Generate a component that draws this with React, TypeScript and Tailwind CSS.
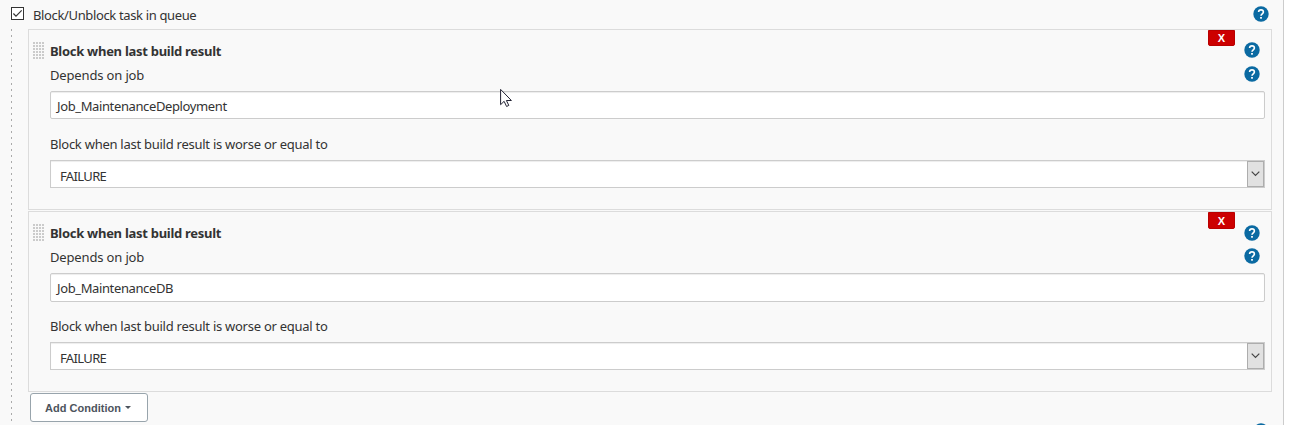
import React from "react";

function Help({ className = "" }: { className?: string }) {
  return (
    <svg className={`block shrink-0 ${className}`} width="16" height="16" viewBox="0 0 16 16" aria-label="Help">
      <circle cx="8" cy="8" r="7.7" fill="#0b6aa2" />
      <path d="M5.6 6.1C5.6 4.6 6.6 3.9 8 3.9s2.4.8 2.4 2.1c0 1.7-2.4 1.9-2.4 3.8" fill="none" stroke="#fff" strokeWidth="1.6" />
      <rect x="7.1" y="11" width="1.8" height="1.7" fill="#fff" />
    </svg>
  );
}

function Grip() {
  return (
    <div className="grid h-[18px] w-[11px] shrink-0 grid-cols-[repeat(4,2px)] grid-rows-[repeat(6,2px)] gap-px">
      {Array.from({ length: 24 }, (_, i) => (
        <span key={i} className="h-[2px] w-[2px] bg-[#cbcbcb]" />
      ))}
    </div>
  );
}

function Condition({ job, tall = false }: { job: string; tall?: boolean }) {
  return (
    <section className="relative flex h-[181px] w-[1244px] flex-col border border-[#dcdcdc] pl-[21px]">
      <button className={`absolute left-[1179px] top-0 flex w-[27px] items-center justify-center rounded-b-[2px] border border-[#b90000] bg-[#cc0000] pt-px font-['Liberation_Sans',sans-serif] text-[11px] font-bold leading-none text-white ${tall ? "h-[17px]" : "h-4"}`}>
        X
      </button>
      <div className="mt-[11px] flex h-5 items-center">
        <div className="-ml-[17px] mr-[6px]"><Grip /></div>
        <h2 className="grow text-[13px] font-bold leading-5 tracking-[-0.28px] text-[#333]">Block when last build result</h2>
        <Help className={tall ? "mr-[11px] -mt-px" : "mr-[11px] -mt-[3px]"} />
      </div>
      <div className="mt-1 flex h-5 items-center">
        <label className="grow tracking-[-0.15px]">Depends on job</label>
        <Help className="mr-[11px] -mt-[3px]" />
      </div>
      <div className={`mt-[6px] flex w-[1215px] shrink-0 items-center rounded-[2px] border border-[#ccc] bg-white pl-[6px] shadow-[inset_0_1px_1px_rgba(0,0,0,0.075)] ${tall ? "h-[29px]" : "h-7"}`}>
        <span className={`tracking-[-0.38px] ${tall ? "mt-px" : "mt-[2px]"}`}>{job}</span>
      </div>
      <label className={`h-5 tracking-[-0.26px] ${tall ? "mt-[14px]" : "mt-[15px]"}`}>Block when last build result is worse or equal to</label>
      <div className="mt-[6px] flex h-7 w-[1215px] shrink-0 items-center justify-between border border-[#ccc] bg-white pl-[9px] shadow-[inset_0_1px_1px_rgba(0,0,0,0.075)]">
        <span className="mt-[3px] tracking-[-0.65px]">FAILURE</span>
        <span className="flex h-[26px] w-[17px] items-center justify-center border border-[#adadad] bg-[#e1e1e1]">
          <svg className="-ml-px" width="9" height="6" viewBox="0 0 9 6"><path d="M.7.7 4.5 4.5 8.3.7" fill="none" stroke="#444" strokeWidth="1.2" /></svg>
        </span>
      </div>
    </section>
  );
}

export default function App() {
  return (
    <div className="relative h-[425px] w-full overflow-hidden bg-white font-['Noto_Sans',sans-serif] text-[13px] leading-5 text-[#333]">
      <main className="flex h-[425px] w-[1284px] flex-col border-r border-[#ccc] bg-[#f9f9f9]">
        <header className="flex h-[29px] shrink-0 items-center pl-[11px] pr-[14px]">
          <svg className="-mt-[2px] block" width="13" height="13" viewBox="0 0 13 13">
            <rect x=".5" y=".5" width="12" height="12" fill="#fff" stroke="#333" />
            <path d="M2.4 6.5 5 9.1 10.7 3.4" fill="none" stroke="#333" strokeWidth="1.2" />
          </svg>
          <span className="ml-[9px] grow tracking-[-0.36px]">Block/Unblock task in queue</span>
          <Help className="-mt-px" />
        </header>
        <div className="flex">
          <div className="ml-[11px] mr-4 h-[393px] w-px bg-[repeating-linear-gradient(to_bottom,#aaa_0_2px,transparent_2px_6px)]" />
          <div className="flex flex-col gap-px">
            <Condition job="Job_MaintenanceDeployment" />
            <Condition job="Job_MaintenanceDB" tall />
            <button className="ml-[2px] flex h-[29px] w-[118px] items-center rounded-[3px] border border-[#98a4ac] bg-white pl-[14px] font-['Liberation_Sans',sans-serif] text-[11px] font-bold tracking-[0.02px] text-[#4d545d]">
              Add Condition
              <svg className="ml-1" width="6" height="3" viewBox="0 0 6 3"><path d="M0 0h6L3 3z" fill="#4d545d" /></svg>
            </button>
          </div>
        </div>
      </main>
      <Help className="absolute left-[1253px] top-[423px]" />
      <svg className="absolute left-[500px] top-[88px]" width="13" height="20" viewBox="0 0 13 20">
        <path d="M.6 1.4v15.3l3.5-3.4 2.5 5.2 2.2-1.1-2.4-4.9h5z" fill="#fff" stroke="#222233" strokeWidth="1" />
      </svg>
    </div>
  );
}
